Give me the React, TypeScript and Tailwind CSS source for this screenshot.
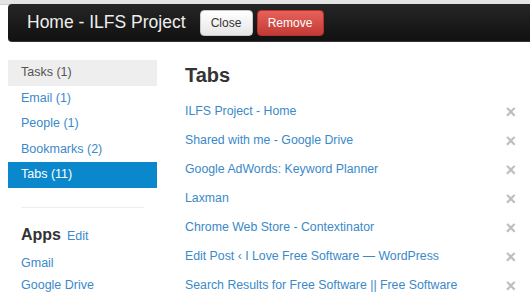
import React from "react";

const tabs = [
  "ILFS Project - Home",
  "Shared with me - Google Drive",
  "Google AdWords: Keyword Planner",
  "Laxman",
  "Chrome Web Store - Contextinator",
  "Edit Post ‹ I Love Free Software — WordPress",
  "Search Results for Free Software || Free Software",
];

const navItems = [
  { label: "Tasks (1)", state: "hover" },
  { label: "Email (1)", state: "" },
  { label: "People (1)", state: "" },
  { label: "Bookmarks (2)", state: "" },
  { label: "Tabs (11)", state: "active" },
];

export default function App() {
  return (
    <div className="w-[530px] h-[297px] overflow-hidden bg-white font-['Liberation_Sans',Arial,sans-serif]">
      {/* top band */}
      <div className="h-[5px] bg-[#e4e4e4] border-b border-[#cfcfcf]" />
      <div className="pl-2">
        <div className="h-[38px] -mt-px rounded-l-[4px] bg-linear-to-b from-[#262626] to-[#111111] border-b border-[#333] flex items-center pl-[19px]">
          <span className="text-[17.5px] text-[#eeeeee] mr-[14px]">Home - ILFS Project</span>
          <button className="h-[26px] w-[53px] rounded-[4px] border border-[#c8c8c8] bg-linear-to-b from-white to-[#e6e6e6] text-[12px] text-[#333]">
            Close
          </button>
          <button className="ml-1 h-[26px] w-[67px] rounded-[4px] border border-[#b8322c] bg-linear-to-b from-[#e8605b] to-[#c23a33] text-[12px] text-white">
            Remove
          </button>
        </div>

        <div className="flex mt-[18px]">
          {/* sidebar */}
          <div className="w-[149px] shrink-0">
            {navItems.map((item) => (
              <div
                key={item.label}
                className={
                  "h-[25.5px] flex items-center pl-[13px] text-[12.5px] " +
                  (item.state === "active"
                    ? "bg-[#0b87cb] text-white"
                    : item.state === "hover"
                    ? "bg-[#eeeeee] text-[#555]"
                    : "text-[#3b89c9]")
                }
              >
                {item.label}
              </div>
            ))}
            <div className="mx-[13px] mt-[19px] h-px bg-[#eeeeee]" />
            <div className="pl-[13px] mt-[15.5px] leading-[24px]">
              <span className="text-[16px] font-bold text-[#333]">Apps</span>
              <span className="ml-[6px] text-[12.5px] text-[#3b89c9]">Edit</span>
            </div>
            <div className="pl-[13px] mt-[4px] leading-[22px] text-[12.5px] text-[#3b89c9]">Gmail</div>
            <div className="pl-[13px] leading-[22px] text-[12.5px] text-[#3b89c9]">Google Drive</div>
          </div>

          {/* main */}
          <div className="ml-[28px] flex-1 pr-[14px]">
            <h1 className="h-[30px] leading-[30px] text-[20px] font-bold text-[#333]">Tabs</h1>
            <ul className="mt-[7px]">
              {tabs.map((t) => (
                <li key={t} className="h-[29px] flex items-center justify-between">
                  <span className="text-[12.3px] text-[#3b89c9]">{t}</span>
                  <span className="text-[18px] font-bold text-[#bdbdbd] leading-none">×</span>
                </li>
              ))}
            </ul>
          </div>
        </div>
      </div>
    </div>
  );
}
